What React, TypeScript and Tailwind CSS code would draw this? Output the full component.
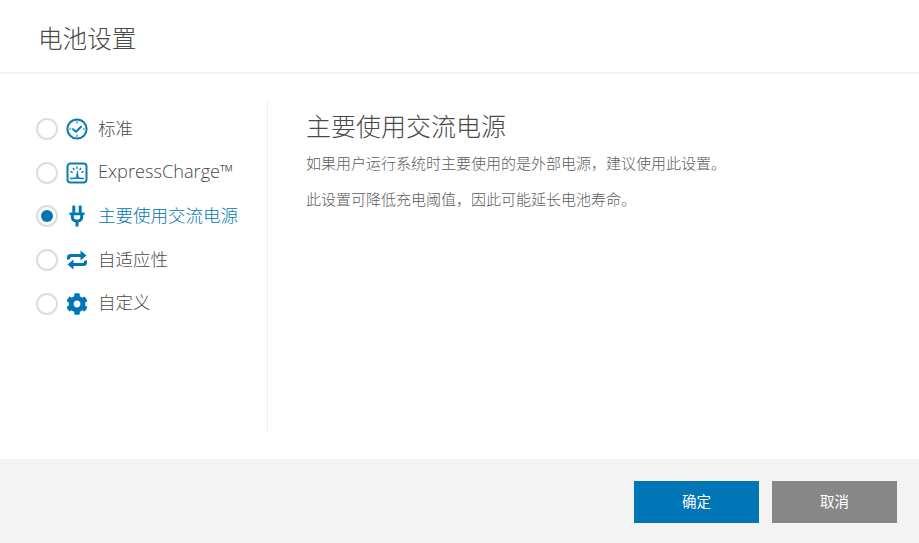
import { FaCog } from 'react-icons/fa'

const BLUE = '#0076b6'

function ClockCheckIcon() {
  return (
    <svg width="22" height="22" viewBox="0 0 22 22" fill="none" stroke="#0a7cb0" strokeWidth="2" strokeLinecap="round" strokeLinejoin="round">
      <circle cx="11" cy="11" r="9.600" />
      <path d="M7 11.200l3 2.600 5-5" />
      <path d="M11 3.600v1.200M18.400 11h-1.200M11 18.400v-1.200M3.600 11h1.200" strokeWidth="1.200" />
    </svg>
  )
}

function GaugeIcon() {
  return (
    <svg width="22" height="22" viewBox="0 0 22 22" fill="none" stroke="#0a7cb0" strokeLinecap="round">
      <path d="M4.500 1.500h13a3 3 0 0 1 3 3v13a3 3 0 0 1-3 3h-13a3 3 0 0 1-3-3v-13a3 3 0 0 1 3-3z" strokeWidth="2" />
      <path d="M4.800 9.500l1.400.8M7.300 6.300l.8 1.300M11 5v1.600M14.700 6.300l-.8 1.300M17.200 9.500l-1.400.8" strokeWidth="1.400" />
      <path d="M10.400 15.500l1-6.500 1 6.500z" fill="#0a7cb0" strokeWidth="0.800" />
      <path d="M4.500 16.500c2.500 0 4.500-.6 6.500-.6s4 .6 6.500.6" strokeWidth="1.500" />
    </svg>
  )
}

function PlugIcon() {
  return (
    <svg width="22" height="22" viewBox="0 0 22 22" fill={BLUE}>
      <rect x="6.300" y="0.500" width="3" height="7.500" rx="1" />
      <rect x="12.700" y="0.500" width="3" height="7.500" rx="1" />
      <path d="M3.500 7.500h15v2.400h-1.300v1.500a6 6 0 0 1-4.700 5.900V21.500h-3v-4.200a6 6 0 0 1-4.700-5.900V9.900H3.500z" />
      <path d="M7.800 10.200v1.200a3.200 3.200 0 0 0 6.400 0v-1.200z" fill="#fff" />
    </svg>
  )
}

function RepeatIcon() {
  return (
    <svg width="22" height="22" viewBox="0 0 22 22" fill={BLUE}>
      <path d="M1 11V8.500A3.500 3.500 0 0 1 4.500 5H14.500V1.500L20.500 6.500L14.500 11.500V8H5.500a1.500 1.500 0 0 0-1.500 1.500v.500z" />
      <path d="M21 11v2.500a3.500 3.500 0 0 1-3.500 3.500H7.500v3.500L1.500 15.500L7.500 10.500V14h9a1.500 1.500 0 0 0 1.500-1.500V12z" />
    </svg>
  )
}

const options = [
  { label: '标准', icon: <ClockCheckIcon /> },
  { label: 'ExpressCharge™', icon: <GaugeIcon />, latin: true },
  { label: '主要使用交流电源', icon: <PlugIcon />, selected: true },
  { label: '自适应性', icon: <RepeatIcon /> },
  { label: '自定义', icon: <FaCog size={22} color={BLUE} /> },
]

export default function App() {
  return (
    <div className="flex h-[543px] w-[919px] flex-col overflow-hidden bg-white font-['Open_Sans','Noto_Sans_CJK_SC',sans-serif] text-[#4a4a4a]">
      <header className="h-[74px] border-b-2 border-[#f4f4f4] pl-[38px] pt-[21px]">
        <h1 className="text-[24.6px] leading-[36px] font-light">电池设置</h1>
      </header>

      <main className="flex h-[385px] pt-[26px]">
        <div className="h-[332px] w-[268px] border-r border-[#eeeeee] pl-[36px] pt-[7px]">
          {options.map((o) => (
            <div key={o.label} className="flex h-[43.7px] items-center">
              <span className="flex size-[22px] items-center justify-center rounded-full border-2 border-[#dddddd] bg-white">
                {o.selected && <span className="size-[12px] rounded-full bg-[#0076b6]" />}
              </span>
              <span className="ml-[8px] flex w-[22px] items-center justify-center">{o.icon}</span>
              <span className={`ml-[10px] whitespace-nowrap pb-[2px] font-light ${o.latin ? 'text-[18.2px]' : 'text-[17.5px]'} ${o.selected ? 'text-[#0076b6]' : 'text-[#4a4a4a]'}`}>
                {o.label}
              </span>
            </div>
          ))}
        </div>

        <section className="pl-[38px] pt-[8px]">
          <h2 className="text-[25px] leading-[36px] font-light">主要使用交流电源</h2>
          <p className="mt-[9px] text-[15px] leading-[20px] font-light text-[#5c5c5c]">如果用户运行系统时主要使用的是外部电源，建议使用此设置。</p>
          <p className="mt-[16px] text-[15px] leading-[20px] font-light text-[#5c5c5c]">此设置可降低充电阈值，因此可能延长电池寿命。</p>
        </section>
      </main>

      <footer className="flex flex-1 items-start justify-end gap-[13px] bg-[#f3f3f3] pr-[22px] pt-[22px]">
        <button className="h-[42px] w-[125px] bg-[#0076b6] text-[14.5px] text-white">确定</button>
        <button className="h-[42px] w-[125px] bg-[#878787] text-[14.5px] text-white">取消</button>
      </footer>
    </div>
  )
}
